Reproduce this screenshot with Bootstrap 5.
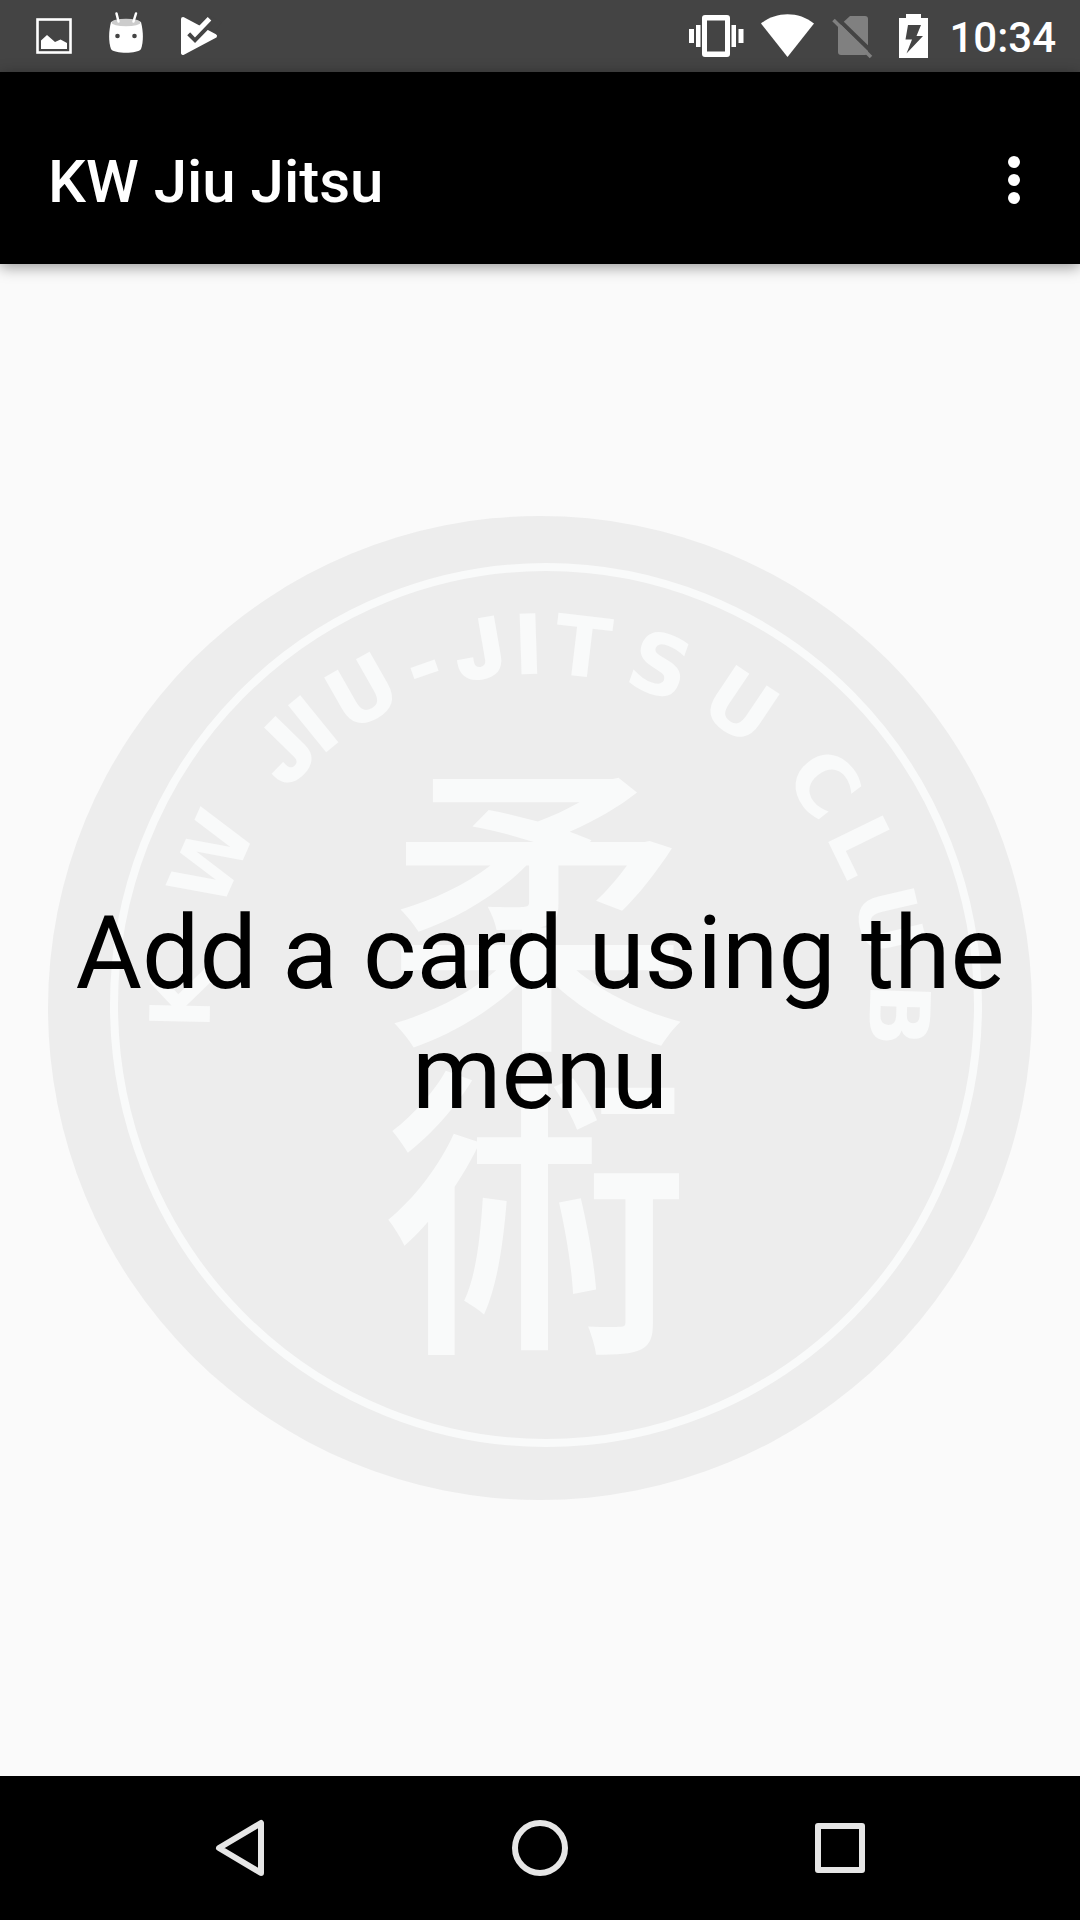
<!DOCTYPE html>
<html lang="en">
<head>
<meta charset="utf-8">
<meta name="viewport" content="width=device-width, initial-scale=1">
<title>KW Jiu Jitsu</title>
<link href="https://cdn.jsdelivr.net/npm/bootstrap@5.3.0/dist/css/bootstrap.min.css" rel="stylesheet">
<style>
  body { font-family: Roboto, "Liberation Sans", sans-serif; background: #fafafa; color: #000; }
  svg { display: block; flex: none; }
  .status-bar { background: #444; height: 72px; padding: 0 24px 0 18px; }
  .clock { font-size: 42px; line-height: 48px; font-weight: 500; margin-left: 5px; padding-top: 4px; }
  .app-bar { height: 192px; padding: 24px 24px 0 48px; box-shadow: 0 3px 14px rgba(0, 0, 0, .4); z-index: 1; }
  .app-title { font-size: 60px; line-height: 72px; font-weight: 500; padding-top: 4px; }
  .empty-state { display: grid; place-items: center; padding: 0 48px 24px; }
  .empty-state > * { grid-area: 1 / 1; }
  .crest { width: 100%; height: auto; max-width: 984px; }
  .crest-word { font: 700 83px "DejaVu Sans", sans-serif; }
  .crest-j { font-family: Inter, "Liberation Sans", sans-serif; font-weight: 900; }
  .crest-kanji { font: 500 306px "Noto Sans CJK JP", sans-serif; }
  .hint { font-size: 102px; line-height: 120px; padding-top: 10px; }
  .nav-keys { height: 144px; padding: 0 8.333%; }
</style>
<script src="https://cdn.jsdelivr.net/npm/bootstrap@5.3.0/dist/js/bootstrap.bundle.min.js" defer></script>
</head>
<body class="min-vh-100 d-flex flex-column">

<div class="status-bar d-flex align-items-center justify-content-between text-white">
  <div class="d-flex">
    <!-- picture -->
    <svg width="72" height="72" viewBox="18 0 72 72" aria-hidden="true">
      <rect x="37.500" y="19.500" width="33" height="33" fill="none" stroke="#fff" stroke-width="2.600"/>
      <path d="M41 49V40.500L47 35L55 42L60.500 39.500L67 43V49Z" fill="#fff"/>
    </svg>
    <!-- robot head -->
    <svg width="72" height="72" viewBox="90 0 72 72" aria-hidden="true">
      <path d="M111 22C118 18.500 134 18.500 141 22C143.500 32 143.500 42 141 49C138 54 114 54 111 49C108.500 42 108.500 32 111 22Z" fill="#fff"/>
      <ellipse cx="126" cy="22.500" rx="14.500" ry="3.800" fill="#ccc"/>
      <path d="M116.500 13.500L118.500 21.500M136 13.500L133.500 21.500" stroke="#fff" stroke-width="2.500" stroke-linecap="round"/>
      <circle cx="117.500" cy="36" r="2.300" fill="#444"/><circle cx="134.500" cy="36" r="2.300" fill="#444"/>
    </svg>
    <!-- play triangle with tick -->
    <svg width="72" height="72" viewBox="162 0 72 72" aria-hidden="true">
      <path d="M183 19L215 36L183 53Z" fill="#fff" stroke="#fff" stroke-width="4" stroke-linejoin="round"/>
      <path d="M200 25L209 16L222 22L216 30L208 28.500Z" fill="#444"/>
      <path d="M189 33.500L195 39.500L211 23" fill="none" stroke="#444" stroke-width="5"/>
      <path d="M191 29.500L195 33.800L209.500 18.800" fill="none" stroke="#fff" stroke-width="5"/>
    </svg>
  </div>
  <div class="d-flex align-items-center">
    <!-- vibrate -->
    <svg width="72" height="72" viewBox="680 0 72 72" fill="#fff" aria-hidden="true">
      <path fill-rule="evenodd" d="M705 15H727Q730 15 730 18V54Q730 57 727 57H705Q702 57 702 54V18Q702 15 705 15ZM707 20.500V51.500H725V20.500Z"/>
      <path d="M689 29h5v14h-5zM696 25h4.500v22H696zM731.500 25h4.500v22h-4.500zM738.500 29h5v14h-5z"/>
    </svg>
    <!-- wifi -->
    <svg width="72" height="72" viewBox="752 0 72 72" fill="#fff" aria-hidden="true">
      <path d="M787.500 57L761 23.500C776 11 799 11 814 23.500Z"/>
    </svg>
    <!-- no SIM -->
    <svg width="60" height="72" viewBox="824 0 60 72" aria-hidden="true">
      <path d="M850 16H865Q868 16 868 19V52Q868 55 865 55H841Q838 55 838 52V27Z" fill="#808080"/>
      <path d="M836 17L874 54" stroke="#444" stroke-width="4"/>
      <path d="M833.500 20L871 57" stroke="#808080" stroke-width="3.500"/>
    </svg>
    <!-- charging battery -->
    <svg width="60" height="72" viewBox="884 0 60 72" aria-hidden="true">
      <path d="M899 18H906V14H921V18H928V58H899Z" fill="#fff"/>
      <path d="M908 25H921L916.500 36H923L906.500 53.500L912 39.500H905.500Z" fill="#444"/>
    </svg>
    <time class="clock">10:34</time>
  </div>
</div>

<header class="app-bar d-flex align-items-center justify-content-between bg-black text-white position-relative">
  <h1 class="app-title m-0">KW Jiu Jitsu</h1>
  <button type="button" class="btn p-0 border-0" aria-label="More options">
    <svg width="84" height="84" viewBox="0 0 84 84" fill="#fff" aria-hidden="true">
      <circle cx="42" cy="24" r="6"/><circle cx="42" cy="42" r="6"/><circle cx="42" cy="60" r="6"/>
    </svg>
  </button>
</header>

<main class="empty-state flex-grow-1">
  <svg class="crest" viewBox="0 0 984 984" fill="#f9fafa">
    <defs><path id="crest-arc" d="M167 545A330 330 0 1 1 817 545"/></defs>
    <circle cx="492" cy="492" r="492" fill="#ededed"/>
    <ellipse cx="498" cy="489" rx="432" ry="438" fill="none" stroke="#f9fafa" stroke-width="8"/>
    <text class="crest-word" text-anchor="middle"><textPath href="#crest-arc"><tspan x="64 195 250 313 351 405 466 519 565 615 688 771 825 876 944 1017 1104">KW <tspan class="crest-j">J</tspan>IU-<tspan class="crest-j">J</tspan>ITSU CLUB</tspan></textPath></text>
    <text class="crest-kanji" text-anchor="middle"><tspan x="489" y="510">柔</tspan><tspan x="489" y="813">術</tspan></text>
  </svg>
  <p class="hint text-center m-0">Add a card using the menu</p>
</main>

<nav class="nav-keys bg-black d-flex align-items-center" aria-label="System">
  <button type="button" class="btn p-0 border-0 flex-fill d-flex justify-content-center" aria-label="Back">
    <svg width="72" height="72" viewBox="0 0 72 72" fill="none" stroke="#e6e6e6" stroke-width="6" stroke-linejoin="round" aria-hidden="true"><path d="M57 11V61L15 36Z"/></svg>
  </button>
  <button type="button" class="btn p-0 border-0 flex-fill d-flex justify-content-center" aria-label="Home">
    <svg width="72" height="72" viewBox="0 0 72 72" fill="none" stroke="#e6e6e6" stroke-width="6" aria-hidden="true"><circle cx="36" cy="36" r="25"/></svg>
  </button>
  <button type="button" class="btn p-0 border-0 flex-fill d-flex justify-content-center" aria-label="Overview">
    <svg width="72" height="72" viewBox="0 0 72 72" fill="none" stroke="#e6e6e6" stroke-width="6" stroke-linejoin="round" aria-hidden="true"><rect x="14" y="14" width="44" height="44"/></svg>
  </button>
</nav>
</body>
</html>
